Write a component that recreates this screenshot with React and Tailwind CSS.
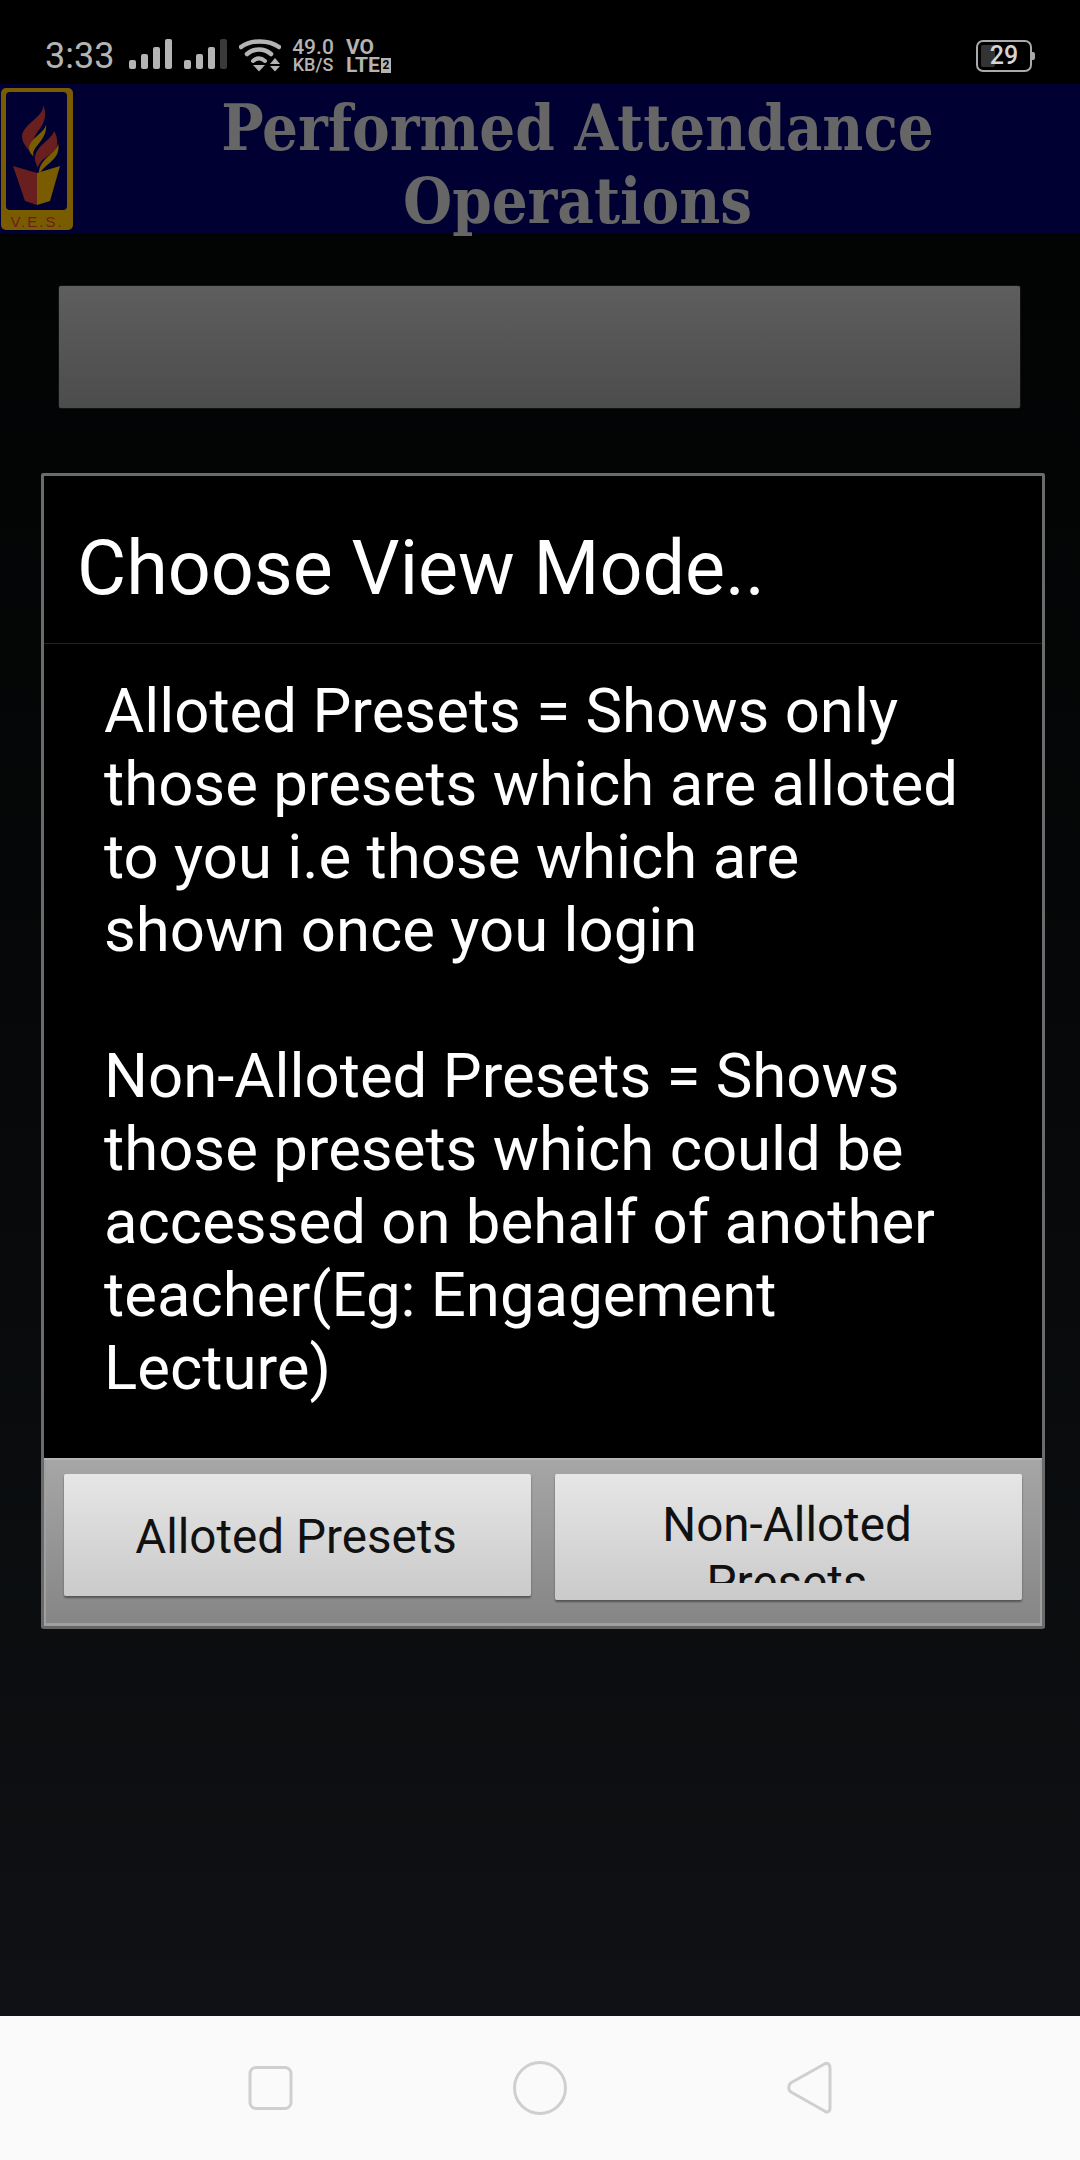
const roboto = { fontFamily: 'Roboto, sans-serif' };

function Bars({ lastDim }) {
  const hs = [9, 15, 22, 30];
  return (
    <div className="flex items-end gap-[5px] h-[30px]">
      {hs.map((h, i) => (
        <div
          key={i}
          className={`w-[7px] rounded-[2px] ${lastDim && i === 3 ? 'bg-[#3a3a3a]' : 'bg-[#b4b4b4]'}`}
          style={{ height: h }}
        />
      ))}
    </div>
  );
}

function Wifi() {
  return (
    <svg width="42" height="33" viewBox="0 0 42 33" fill="none" className="block">
      <path d="M2 8 C12 0.500 30 0.500 40 8" stroke="#b4b4b4" strokeWidth="4.500" strokeLinecap="round" />
      <path d="M8 15 C15 9 25 9 32 15" stroke="#b4b4b4" strokeWidth="4.500" strokeLinecap="round" />
      <path d="M14 22 C18 18.500 22 18.500 26 22" stroke="#b4b4b4" strokeWidth="4" strokeLinecap="round" />
      <path d="M14 26 H26 L20 32.500 Z" fill="#b4b4b4" />
      <path d="M36 19 L41 25 H31 Z" fill="#b4b4b4" />
      <path d="M31 27 H41 L36 32.500 Z" fill="#b4b4b4" />
    </svg>
  );
}

function Logo() {
  return (
    <svg width="73" height="142" viewBox="0 0 73 142" className="block">
      <rect x="1" y="0" width="72" height="142" rx="5" fill="#7a5c00" />
      <rect x="6" y="4" width="61" height="118" rx="4" fill="#000033" />
      <path d="M43 17 C45 28 23 36 22 48 C22 58 31 62 36 72 C29 58 33 50 39 42 C45 34 47 26 43 17 Z" fill="#6a1f1f" />
      <path d="M46 36 C46 44 30 50 29 60 C29 64 31 66 33 68 C32 58 48 52 46 36 Z" fill="#7a5c00" />
      <path d="M54 43 C52 52 34 58 35 72 C36 76 37 78 38 80 C40 68 60 66 57 52 C57 48 55 45 54 43 Z" fill="#6a1f1f" />
      <path d="M58 55 C58 64 40 70 39 84 C39 85 39 86 39 87 C43 76 62 72 58 55 Z" fill="#7a5c00" />
      <path d="M13 78 L37 85 L37 117 L25 113 Z" fill="#6a1f1f" />
      <path d="M60 78 L37 85 L37 117 L50 113 Z" fill="#7a5c00" />
      <text x="37" y="139" textAnchor="middle" fontSize="15" fill="#6a1f1f" style={{ fontFamily: '"Liberation Sans", sans-serif', letterSpacing: '2px' }}>
        V.E.S.
      </text>
    </svg>
  );
}

function NavIcons() {
  return (
    <div className="h-[144px] bg-[#fafafa] flex items-start">
      <svg width="1080" height="144" viewBox="0 0 1080 144" fill="none" className="block">
        <rect x="250" y="51.500" width="41" height="41" rx="6" stroke="#cfcfcf" strokeWidth="3" />
        <circle cx="540" cy="72" r="25.500" stroke="#cfcfcf" strokeWidth="3" />
        <path d="M824.500 48 L791 66.700 C788 69 788 74 791 76 L824.500 95 C827 97 830 96 830 92 V52 C830 48 827 46 824.500 48 Z" stroke="#cfcfcf" strokeWidth="3" strokeLinejoin="round" />
      </svg>
    </div>
  );
}

function DialogButton({ children, tall, clip }) {
  return (
    <div
      className={`flex-1 min-w-0 rounded-[2px] bg-gradient-to-b from-[#e6e6e6] to-[#cacaca] text-[#111] text-center text-[47.600px] shadow-[0_2px_2px_#555] ${
        tall ? 'h-[126px] pr-[3px]' : 'h-[122px] flex items-center justify-center pr-[3px] pt-[6px]'
      }`}
      style={roboto}
    >
      {clip ? (
        <div className="h-[109px] overflow-hidden pt-[22px] leading-[58px]">
          Non-Alloted
          <br />
          Presets
        </div>
      ) : (
        children
      )}
    </div>
  );
}

export default function App() {
  return (
    <div className="w-[1080px] h-[2160px] flex flex-col bg-black overflow-hidden" style={roboto}>
      <div className="h-[84px] bg-black flex items-start pt-[37px] pl-[45px] pr-[45px] text-[#b4b4b4]">
        <div className="text-[36px] leading-[36px] w-[74px] mt-[1px]">3:33</div>
        <div className="ml-[10px] mt-[2px]"><Bars /></div>
        <div className="ml-[12px] mt-[2px]"><Bars lastDim /></div>
        <div className="ml-[12px] mt-[2px]"><Wifi /></div>
        <div className="ml-[12px] w-[40px] flex flex-col items-center font-medium mt-[1px]">
          <div className="text-[21px] leading-[18px]">49.0</div>
          <div className="text-[18px] leading-[15px] mt-[1px]">KB/S</div>
        </div>
        <div className="ml-[13px] flex flex-col font-bold mt-[1px]">
          <div className="text-[21px] leading-[18px]">VO</div>
          <div className="flex items-center text-[21px] leading-[17px] mt-[1px]">
            LTE
            <span className="ml-[1px] w-[10px] h-[15px] bg-[#b4b4b4] text-black text-[12px] leading-[15px] text-center">2</span>
          </div>
        </div>
        <div className="ml-auto flex items-center mt-[3px]">
          <div className="w-[56px] h-[32px] rounded-[7px] border-[2.500px] border-[#aaa] relative flex items-center justify-center text-[#d4d4d4] text-[25px] font-medium">
            <div className="absolute left-[3px] top-[3px] bottom-[3px] w-[14px] bg-[#333] rounded-[2px]" />
            <span className="relative">29</span>
          </div>
          <div className="w-[3px] h-[8px] bg-[#aaa] rounded-r-[2px]" />
        </div>
      </div>

      <div className="h-[149px] bg-[#000033] flex items-center relative">
        <div className="absolute left-0 top-[4px]"><Logo /></div>
        <div
          className="w-full pl-[75px] text-center text-[62.800px] leading-[73px] font-bold text-[#666666] pt-[13px] overflow-hidden"
          style={{ fontFamily: '"DejaVu Serif Condensed", "DejaVu Serif", serif', fontStretch: 'condensed' }}
        >
          Performed Attendance
          <br />
          Operations
        </div>
      </div>

      <div className="flex-1 bg-gradient-to-b from-[#020303] to-[#0f1114] flex flex-col pl-[41px] pt-[53px]">
        <div className="ml-[18px] w-[961px] h-[122px] rounded-[2px] bg-gradient-to-b from-[#5e5e5e] to-[#4c4c4c] shadow-[0_0_1px_#999]" />
        <div className="mt-[65px] w-[1004px] h-[1156px] flex flex-col rounded-[3px] border-[3px] border-[#6b6b6b] border-b-[#666] bg-black overflow-hidden">
          <div className="h-[168px] flex items-center pl-[33px] text-[75.500px] leading-[72px] text-white border-b border-[#222] shrink-0 pt-[16px]">
            Choose View Mode..
          </div>
          <div className="flex-1 pl-[60px] pt-[31px] text-[61.700px] leading-[73px] text-white">
            <p>Alloted Presets = Shows only</p>
            <p>those presets which are alloted</p>
            <p>to you i.e those which are</p>
            <p>shown once you login</p>
            <p className="h-[73px]" />
            <p>Non-Alloted Presets = Shows</p>
            <p>those presets which could be</p>
            <p>accessed on behalf of another</p>
            <p>teacher(Eg: Engagement</p>
            <p>Lecture)</p>
          </div>
          <div className="h-[168px] shrink-0 bg-gradient-to-b from-[#a6a6a6] to-[#858585] border-t-[2px] border-t-[#b5b5b5] flex items-start gap-[24px] px-[20px] pt-[14px] shadow-[inset_0_-3px_0_#a0a0a0,inset_2px_0_0_#a0a0a0,inset_-2px_0_0_#a0a0a0]">
            <DialogButton>Alloted Presets</DialogButton>
            <DialogButton tall clip />
          </div>
        </div>
      </div>

      <NavIcons />
    </div>
  );
}
